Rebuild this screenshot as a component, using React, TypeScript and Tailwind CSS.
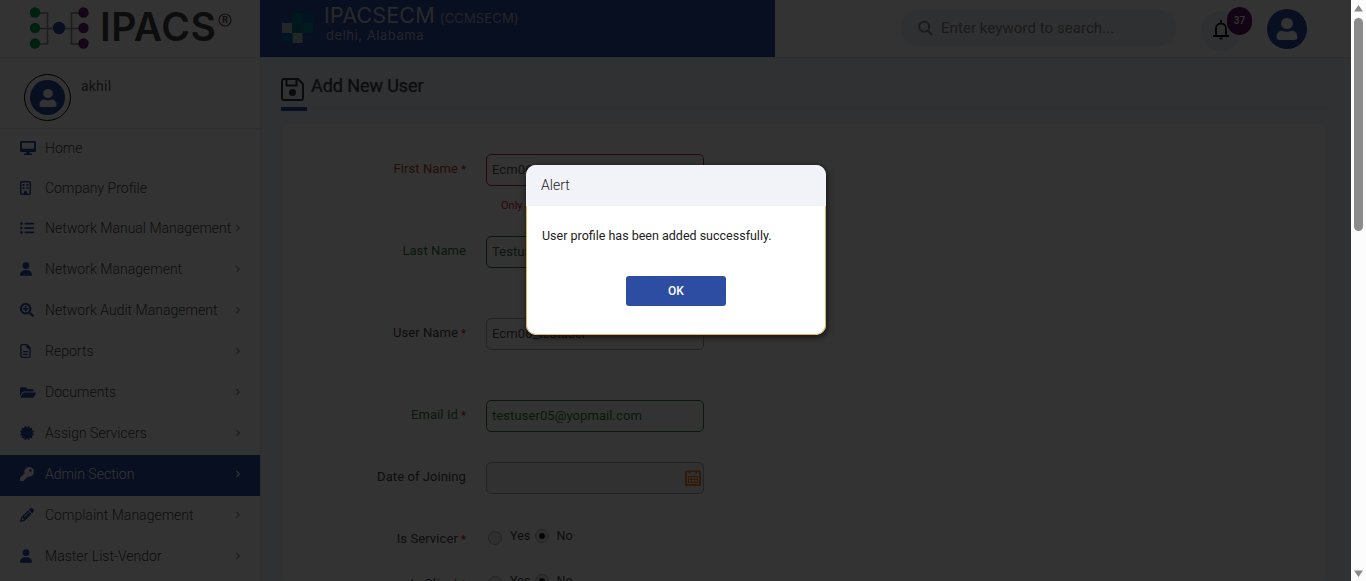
import type { ReactNode } from 'react';
import {
  FaChevronRight,
  FaCertificate,
  FaFolderOpen,
  FaKey,
  FaListUl,
  FaSearchPlus,
} from 'react-icons/fa';
import { FaUser, FaRegFileLines, FaPencil } from 'react-icons/fa6';

type NavItem = { label: string; icon: ReactNode; arrow?: boolean; active?: boolean; short?: boolean };

const nav: NavItem[] = [
  { label: 'Home', icon: <Monitor />, short: true },
  { label: 'Company Profile', icon: <Building />, short: true },
  { label: 'Network Manual Management', icon: <FaListUl size={14} />, arrow: true },
  { label: 'Network Management', icon: <FaUser className="h-[14px] w-3" />, arrow: true },
  { label: 'Network Audit Management', icon: <FaSearchPlus size={14} />, arrow: true },
  { label: 'Reports', icon: <FaRegFileLines className="h-[14px] w-[11px]" />, arrow: true },
  { label: 'Documents', icon: <FaFolderOpen className="h-[15px] w-4" />, arrow: true },
  { label: 'Assign Servicers', icon: <FaCertificate size={14} />, arrow: true },
  { label: 'Admin Section', icon: <FaKey size={14} />, arrow: true, active: true },
  { label: 'Complaint Management', icon: <FaPencil size={14} />, arrow: true },
  { label: 'Master List-Vendor', icon: <FaUser className="h-[14px] w-3" />, arrow: true },
];

function Monitor() {
  return (
    <svg width="16" height="14" viewBox="0 0 16 14" fill="currentColor">
      <path
        fillRule="evenodd"
        d="M1.500 0h13A1.500 1.500 0 0 1 16 1.500v8a1.500 1.500 0 0 1-1.500 1.500h-5l.4 1.500H12V14H4v-1.500h2.100L6.500 11h-5A1.500 1.500 0 0 1 0 9.500v-8A1.500 1.500 0 0 1 1.500 0zM2 1.700v6h12v-6z"
      />
    </svg>
  );
}

function Building() {
  return (
    <svg width="11" height="14" viewBox="0 0 11 14" fill="none">
      <rect x=".7" y=".7" width="9.6" height="12.6" rx="1.2" stroke="currentColor" strokeWidth="1.4" />
      <path d="M2.6 3h2v1.8h-2zM6.4 3h2v1.8h-2zM2.6 6.2h2V8h-2zM6.4 6.2h2V8h-2zM4 13.3v-2a1.5 1.5 0 0 1 3 0v2z" fill="currentColor" />
    </svg>
  );
}

function Person({ size }: { size: number }) {
  return (
    <svg width={size} height={size} viewBox="0 0 20 20" fill="currentColor">
      <ellipse cx="10" cy="5" rx="5.400" ry="5" />
      <path d="M.5 17.500c0-3.600 2.200-5.800 5-5.800 1.200 0 2 .9 4.500.9s3.300-.9 4.500-.9c2.800 0 5 2.200 5 5.800 0 1.700-.9 2.500-2.200 2.500H2.700C1.400 20 .5 19.200.5 17.500z" />
    </svg>
  );
}

function Logo() {
  return (
    <svg width="62" height="44" viewBox="0 0 62 44" fill="none">
      <path d="M6 6h12.500v31H6M6 21.500h50M56 6H42.500v31H56" stroke="#8c8c8c" strokeWidth="1.500" />
      {[5.5, 21, 36.5].map((y) => (
        <g key={y}>
          <circle cx="6" cy={y} r="5.200" fill="#00a651" />
          <circle cx="54.500" cy={y} r="5.200" fill="#6d1a6d" />
        </g>
      ))}
      <circle cx="30" cy="21" r="6.200" fill="#2e4ea6" />
    </svg>
  );
}

function Sidebar() {
  return (
    <aside className="w-[261px] shrink-0 border-r border-[#e1e3f2] bg-white">
      <div className="flex h-[58px] border-b border-[#ededed] pt-[7px] pl-[29px]">
        <Logo />
        <span className="ml-[9px] w-[118px] font-[Inter] text-[39px] leading-[40px] font-semibold tracking-[0.500px] text-[#444]">IPACS</span>
        <svg className="mt-[6px]" width="14" height="14" viewBox="0 0 14 14">
          <circle cx="7" cy="7" r="6" fill="none" stroke="#555" strokeWidth="1.200" />
          <text x="7" y="10.200" textAnchor="middle" fontFamily="Inter" fontSize="9" fontWeight="600" fill="#444">R</text>
        </svg>
      </div>
      <div className="flex h-[71px] border-b border-[#ececf2] pt-[16px] pl-6">
        <div className="flex size-[47px] items-center justify-center rounded-full border border-black">
          <div className="flex size-[35px] items-center justify-center rounded-full bg-[#2b4aa2] text-white">
            <Person size={18} />
          </div>
        </div>
        <span className="pt-[2px] pl-[10px] text-sm leading-5 tracking-[0.200px] text-[#555]">akhil</span>
      </div>
      <nav>
        {nav.map((n) => (
          <div
            key={n.label}
            className={`flex items-center pr-[18px] pb-[3px] pl-5 ${n.short ? 'h-10' : 'h-[41px]'} ${n.active ? 'bg-[#2b4aa2] text-white' : 'text-[#444]'}`}
          >
            <span className={`flex w-[25px] shrink-0 ${n.active ? 'text-white' : 'text-[#2b4aa2]'}`}>{n.icon}</span>
            <span className="text-[14px] leading-5 font-light tracking-[0.020px] whitespace-nowrap">{n.label}</span>
            {n.arrow && <FaChevronRight size={8} className={`ml-auto shrink-0 ${n.active ? 'text-white' : 'text-[#999]'}`} />}
          </div>
        ))}
      </nav>
    </aside>
  );
}

function Header() {
  return (
    <header className="flex h-[58px] shrink-0 border-b border-[#dedede] bg-white">
      <div className="-ml-px flex h-[57px] w-[515px] bg-[#2b4aa2] pl-[22px]">
        <svg className="mt-[13px]" width="31" height="30" viewBox="0 0 31 30">
          <path d="M0 10h10.300v10H0zM10.300 20h10.300v10H10.300z" fill="#a3bcbc" />
          <path d="M10.300 0h10.300v10H10.300z" fill="#007f8c" />
          <path d="M20.600 0H31v10H20.600zM0 20h10.300v10H0z" fill="#0b65b0" />
          <path d="M10.300 10h10.300v10H10.300z" fill="#007880" />
          <path d="M20.600 10H31v10H20.600z" fill="#00858a" />
        </svg>
        <div className="ml-[11px] font-[Inter] text-[#c9cbd0]">
          <div className="flex items-baseline pt-[3px] leading-6">
            <span className="text-[21.500px] tracking-[0.150px]">IPACSECM</span>
            <span className="ml-[5px] text-[13px] tracking-[0.150px] text-[#b0b5c6]">(CCMSECM)</span>
          </div>
          <div className="-mt-[2px] pl-[2px] text-[13px] leading-[14px] tracking-[0.550px] text-[#b4b9ca]">delhi, Alabama</div>
        </div>
      </div>
      <div className="ml-[126px] flex h-[57px] items-center">
        <div className="-mt-px flex h-[36px] w-[275px] items-center rounded-full bg-[#eceff5] pl-[17px] text-[#858585]">
          <svg width="15" height="16" viewBox="0 0 15 16" fill="none" stroke="currentColor" strokeWidth="2">
            <circle cx="6.200" cy="6.700" r="5" />
            <path d="m9.800 10.500 4.400 4.700" />
          </svg>
          <span className="ml-2 text-[15px] leading-5 tracking-[0.060px]">Enter keyword to search...</span>
        </div>
        <div className="relative mt-1 ml-[25px] flex size-[40px] items-center justify-center rounded-full bg-[#eceff5] text-black">
          <svg className="-mt-[2px]" width="16" height="20" viewBox="0 0 16 20" fill="none" stroke="currentColor" strokeWidth="1.800">
            <path d="M3 15.500V8.500a5 5 0 0 1 10 0v7M0 16h16" />
            <path d="M8 0v3" />
            <path d="M6.500 18.500h3" />
          </svg>
          <span className="absolute -top-[4px] left-[26px] flex h-[28px] w-[25px] items-center justify-center rounded-full bg-[#5c1068] text-[10px] font-medium text-white">37</span>
        </div>
        <div className="ml-[26px] flex size-10 items-center justify-center rounded-full bg-[#2b4aa2] text-white">
          <Person size={22} />
        </div>
      </div>
    </header>
  );
}

type FieldProps = {
  label: string;
  required?: boolean;
  labelClass?: string;
  boxClass?: string;
  value?: string;
  height: string;
  children?: ReactNode;
  calendar?: boolean;
};

function Star() {
  return <span className="ml-[3px] text-[11px] font-bold text-[#d02028]">*</span>;
}

function Field({ label, required, labelClass = 'text-[#444]', boxClass = 'border-[#aaa] text-[#555]', value, height, children, calendar }: FieldProps) {
  return (
    <div className={`flex ${height}`}>
      <div className={`w-[185px] pt-[5px] text-right text-[13px] leading-5 tracking-[0.080px] ${labelClass}`}>
        {label}
        {required && <Star />}
      </div>
      <div className="ml-5">
        <div className={`flex h-8 w-[218px] items-center rounded-[5px] border pl-[5px] text-[13px] tracking-[0.080px] ${boxClass}`}>
          {value}
          {calendar && (
            <svg className="mr-[2px] ml-auto" width="16" height="16" viewBox="0 0 16 16">
              <rect y=".5" width="16" height="15.500" rx="1.500" fill="#f58220" />
              <path d="M2 2h12v12H2z" fill="#f1f1f1" />
              <path d="M4 .5h1.600v3H4zM10.400.5H12v3h-1.600z" fill="#f58220" />
              <path d="M3.500 6.500h9v6h-9zM3.500 9.500h9M6.500 6.500v6M9.500 6.500v6" fill="none" stroke="#f58220" />
            </svg>
          )}
        </div>
        {children}
      </div>
    </div>
  );
}

function RadioRow({ label, required }: { label: string; required?: boolean }) {
  return (
    <div className="flex h-[45px] text-[13px] leading-5 tracking-[0.100px] text-[#444]">
      <div className="w-[185px] pt-[5px] text-right">
        {label}
        {required && <Star />}
      </div>
      <span className="mt-[7px] ml-[22px] size-[14px] rounded-full border border-[#aaa] bg-[#ececec]" />
      <span className="ml-2 pt-[2px] text-[12.500px]">Yes</span>
      <span className="mt-[5px] ml-1 flex size-[14px] items-center justify-center rounded-full border border-[#aaa] bg-[#ececec]">
        <span className="size-[6px] rounded-full bg-[#222]" />
      </span>
      <span className="ml-2 pt-[2px] text-[12.500px]">No</span>
    </div>
  );
}

function UserForm() {
  return (
    <section className="mr-[25px] ml-5 mt-[15px] h-[460px] overflow-hidden rounded-lg bg-white pt-[30px]">
      <Field label="First Name" required height="h-[82px]" value="Ecm06" labelClass="text-[#b83c3c]" boxClass="border-[#c03038] text-[#555]">
        <div className="pt-[11px] pl-[15px] text-[11px] leading-[18px] text-[#d82028]">Only alphabets are allowed</div>
      </Field>
      <Field label="Last Name" height="h-[82px]" value="Testuser" labelClass="text-[#307a38]" boxClass="border-[#307a38] text-[#406848]" />
      <Field label="User Name" required height="h-[82px]" value="Ecm06_testuser" />
      <Field label="Email Id" required height="h-[62px]" value="testuser05@yopmail.com" labelClass="text-[#307a38]" boxClass="border-[#307a38] text-[#307a38]" />
      <Field label="Date of Joining" height="h-[62px]" boxClass="border-[#aaa] bg-[#f5f5f5]" calendar />
      <RadioRow label="Is Servicer" required />
      <RadioRow label="Is Client" required />
    </section>
  );
}

function AlertDialog() {
  return (
    <div className="absolute top-[165px] left-[526px] flex h-[170px] w-[300px] flex-col overflow-hidden rounded-[10px] bg-white shadow-[1px_2px_6px_rgba(0,0,0,0.7)]">
      <div className="flex h-[41px] items-center bg-[#f1f3f8] pb-px pl-[15px] text-[14px] font-light text-[#222]">Alert</div>
      <div className="flex flex-1 flex-col items-center rounded-b-[10px] border border-t-0 border-[#e8b25c]">
        <p className="w-full pt-5 pl-[15px] text-[12.500px] leading-5 whitespace-nowrap text-[#222]">User profile has been added successfully.</p>
        <button className="mt-[30px] h-[30px] w-[100px] rounded-[3px] bg-[#2d4da3] text-[12px] font-medium text-white">OK</button>
      </div>
    </div>
  );
}

function Scrollbar() {
  return (
    <div className="flex h-full w-[15px] shrink-0 flex-col items-center bg-[#fcfcfc]">
      <svg className="mt-[5px] shrink-0" width="9" height="7" viewBox="0 0 9 7" fill="#8b8b8b">
        <path d="M4.500 0 9 6.500H0z" />
      </svg>
      <div className="mt-[6px] h-[213px] w-[9px] shrink-0 rounded-full bg-[#8b8b8b]" />
      <svg className="mt-auto mb-[4px] shrink-0" width="9" height="7" viewBox="0 0 9 7" fill="#8b8b8b">
        <path d="M4.500 7 0 .5h9z" />
      </svg>
    </div>
  );
}

export default function App() {
  return (
    <div className="flex h-[581px] w-[1366px] overflow-hidden font-[Roboto,sans-serif]">
      <div className="relative flex w-[1351px] overflow-hidden">
        <Sidebar />
        <main className="flex flex-1 flex-col bg-[#f1f3f9]">
          <Header />
          <div className="mr-[25px] ml-5 flex h-[51px] items-start border-b border-[#e6e8ee] pt-[18px]">
            <div className="h-[35px] w-[26px] shrink-0 border-b-4 border-[#2b4aa2]">
              <svg className="mt-[2px]" width="23" height="23" viewBox="0 0 23 23" fill="none" stroke="#333" strokeWidth="2">
                <path d="M3 1h14l5 5v14a2 2 0 0 1-2 2H3a2 2 0 0 1-2-2V3a2 2 0 0 1 2-2z" />
                <path d="M5.500 1v6.500h10V1" />
                <circle cx="11.500" cy="14.500" r="2.500" fill="#333" />
              </svg>
            </div>
            <h1 className="ml-1 text-[18px] leading-5 tracking-[-0.080px] text-[#444] [text-shadow:0_0_1px_#777]">Add New User</h1>
          </div>
          <UserForm />
        </main>
        <div className="absolute inset-0 bg-black/80" />
        <AlertDialog />
      </div>
      <Scrollbar />
    </div>
  );
}
